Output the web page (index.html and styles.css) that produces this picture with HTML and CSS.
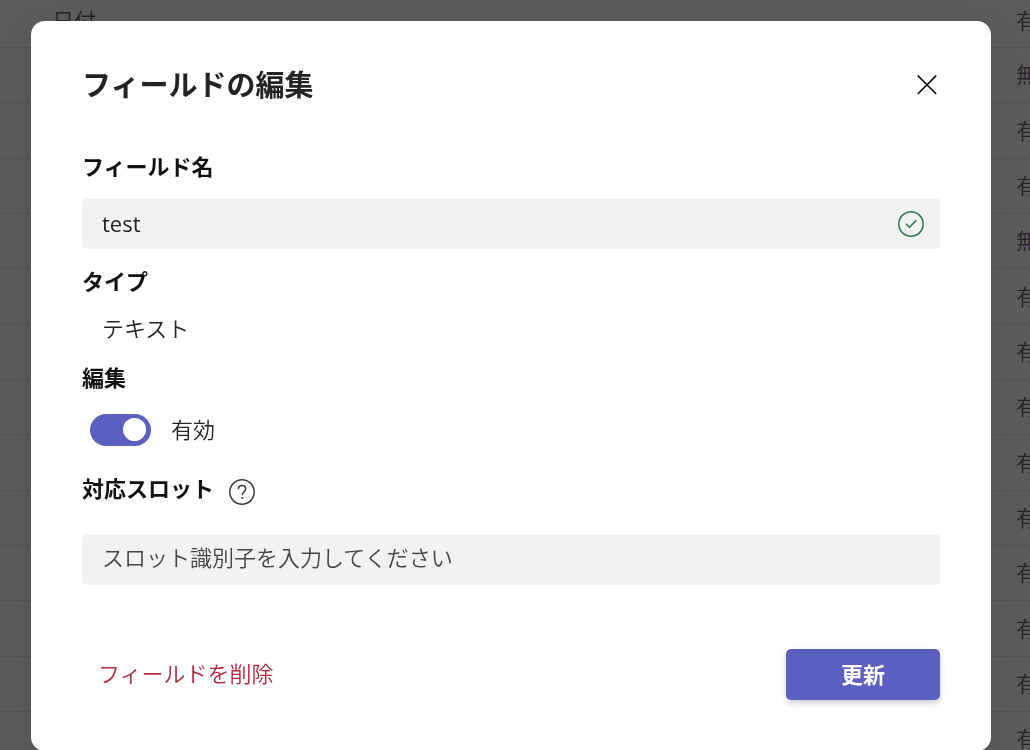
FILE: index.html
```
<!DOCTYPE html>
<html lang="ja">
<head>
  <meta charset="UTF-8" />
  <meta name="viewport" content="width=device-width, initial-scale=1.0"/>
  <title>フィールドの編集</title>
  <link rel="stylesheet" href="styles.css">
</head>
<body>

  <table class="field-table" aria-hidden="true">
    <tr><td>日付</td><td class="state">有効</td></tr>
    <tr><td></td><td class="state">無効</td></tr>
    <tr><td></td><td class="state">有効</td></tr>
    <tr><td></td><td class="state">有効</td></tr>
    <tr><td></td><td class="state">無効</td></tr>
    <tr><td></td><td class="state">有効</td></tr>
    <tr><td></td><td class="state">有効</td></tr>
    <tr><td></td><td class="state">有効</td></tr>
    <tr><td></td><td class="state">有効</td></tr>
    <tr><td></td><td class="state">有効</td></tr>
    <tr><td></td><td class="state">有効</td></tr>
    <tr><td></td><td class="state">有効</td></tr>
    <tr><td></td><td class="state">有効</td></tr>
    <tr><td></td><td class="state">有効</td></tr>
  </table>

  <div class="overlay">
    <form class="dialog" role="dialog" aria-labelledby="dialogTitle">
      <header class="dialog-header">
        <h1 id="dialogTitle">フィールドの編集</h1>
        <button type="button" class="close" aria-label="閉じる">
          <svg width="22" height="22" viewBox="0 0 22 22" fill="none" stroke="#000" stroke-width="1.5">
            <path d="M1.8 1.6L20.2 20M20.2 1.6L1.8 20"/>
          </svg>
        </button>
      </header>

      <div class="field">
        <label class="label" for="fieldName">フィールド名</label>
        <div class="input-box">
          <input type="text" id="fieldName" value="test">
          <svg width="28" height="28" viewBox="0 0 28 28" fill="none" stroke="#237b4b" stroke-width="1.5">
            <circle cx="14" cy="14" r="12.2"/>
            <path d="M9 13.8L12.5 17.2L19.3 10.4"/>
          </svg>
        </div>
      </div>

      <div class="field">
        <h2 class="label">タイプ</h2>
        <p class="value">テキスト</p>
      </div>

      <div class="field edit-field">
        <h2 class="label">編集</h2>
        <div class="toggle-row">
          <input type="checkbox" class="toggle" id="enabled" checked>
          <label for="enabled">有効</label>
        </div>
      </div>

      <div class="field slot-field">
        <div class="label-row">
          <label class="label" for="slot">対応スロット</label>
          <button type="button" class="help" aria-label="ヘルプ">
            <svg width="28" height="28" viewBox="0 0 28 28" fill="none" stroke="#3b3a39" stroke-width="1.5">
              <circle cx="14" cy="14" r="12.2"/>
              <path d="M10.4 11.2C10.4 8.9 12 7.5 14.1 7.5C16.2 7.5 17.7 8.9 17.7 10.9C17.7 13.6 14.2 14 14.2 17.2"/>
              <circle cx="14.2" cy="20" r="1.1" fill="#3b3a39" stroke="none"/>
            </svg>
          </button>
        </div>
        <div class="input-box">
          <input type="text" id="slot" placeholder="スロット識別子を入力してください">
        </div>
      </div>

      <footer class="actions">
        <button type="button" class="delete">フィールドを削除</button>
        <button type="submit" class="submit">更新</button>
      </footer>
    </form>
  </div>

</body>
</html>
```
FILE: styles.css
```
* { box-sizing: border-box; margin: 0; padding: 0; }
body {
  font-family: 'Noto Sans CJK JP', sans-serif;
  font-size: 22px;
  font-weight: 350;
  line-height: 32px;
  color: #252423;
  background: #fff;
  overflow: hidden;
}
button, input {
  font: inherit;
  color: inherit;
  background: none;
  border: none;
}
button {
  cursor: pointer;
}
svg {
  display: block;
}

.field-table {
  width: 110%;
  table-layout: fixed;
  border-collapse: separate;
  border-spacing: 0;
}
.field-table tr {
  height: 55px;
}
.field-table tr:first-child {
  height: 48px;
}
.field-table tr:nth-child(3n) {
  height: 56px;
}
.field-table td {
  padding: 0 0 4px 52px;
  border-bottom: 1px solid #e1dfdd;
}
.field-table tr:first-child td {
  padding-bottom: 10px;
}
.field-table .state {
  width: 117px;
  padding-left: 0;
}

.overlay {
  position: fixed;
  inset: 0;
  padding: 21px 39px 0 31px;
  background: rgba(37, 37, 37, 0.75);
  overflow: hidden;
}
.dialog {
  padding: 42px 51px 51px;
  background: #fff;
  border-radius: 14px;
  box-shadow: 0 12px 36px rgba(0, 0, 0, 0.12);
}
.dialog-header {
  display: flex;
  align-items: center;
  justify-content: space-between;
  margin-bottom: 43px;
}
.dialog-header h1 {
  padding-bottom: 4px;
  font-size: 29px;
  font-weight: 700;
  line-height: 40px;
}
.close {
  padding: 2px;
}

.field {
  display: flex;
  flex-direction: column;
  gap: 16px;
  margin-bottom: 16px;
}
.label {
  font-size: 22px;
  font-weight: 700;
  line-height: 30px;
  padding-bottom: 2px;
  color: #111;
}
.input-box {
  display: flex;
  align-items: center;
  height: 51px;
  padding: 0 15px 0 20px;
  background: #f3f2f1;
  border-radius: 5px;
}
.input-box input {
  flex: 1;
  min-width: 0;
  padding-bottom: 8px;
  outline: none;
}
#fieldName {
  padding-bottom: 2px;
  font-family: 'Open Sans', 'Noto Sans CJK JP', sans-serif;
  font-weight: 400;
}
.input-box input::placeholder {
  color: #484644;
  opacity: 1;
}
.value {
  padding: 0 0 4px 20px;
  line-height: 28px;
}

.edit-field {
  gap: 21px;
  margin-bottom: 28px;
}
.toggle-row {
  display: flex;
  align-items: center;
  gap: 20px;
  padding-left: 8px;
}
.toggle-row label {
  padding-bottom: 4px;
  line-height: 28px;
}
.toggle {
  appearance: none;
  display: flex;
  align-items: center;
  justify-content: flex-end;
  width: 61px;
  height: 32px;
  padding: 0 5px 2px;
  border-radius: 16px;
  background: #c8c6c4;
  cursor: pointer;
}
.toggle::before {
  content: '';
  width: 23px;
  height: 23px;
  border-radius: 50%;
  background: #fff;
}
.toggle:checked {
  background: #5b5fc0;
}

.slot-field {
  gap: 28px;
  margin-bottom: 64px;
}
.label-row {
  display: flex;
  align-items: flex-end;
  gap: 14px;
  height: 32px;
}
.slot-field .label {
  padding-bottom: 4px;
}

.actions {
  display: flex;
  align-items: center;
  justify-content: space-between;
}
.delete {
  padding: 0 16px 6px;
  color: #b0283e;
}
.submit {
  min-width: 154px;
  height: 51px;
  padding-bottom: 4px;
  border-radius: 5px;
  background: #5b5fc0;
  color: #fff;
  font-weight: 700;
  box-shadow: 0 3px 6px rgba(0, 0, 0, 0.2);
}
```
